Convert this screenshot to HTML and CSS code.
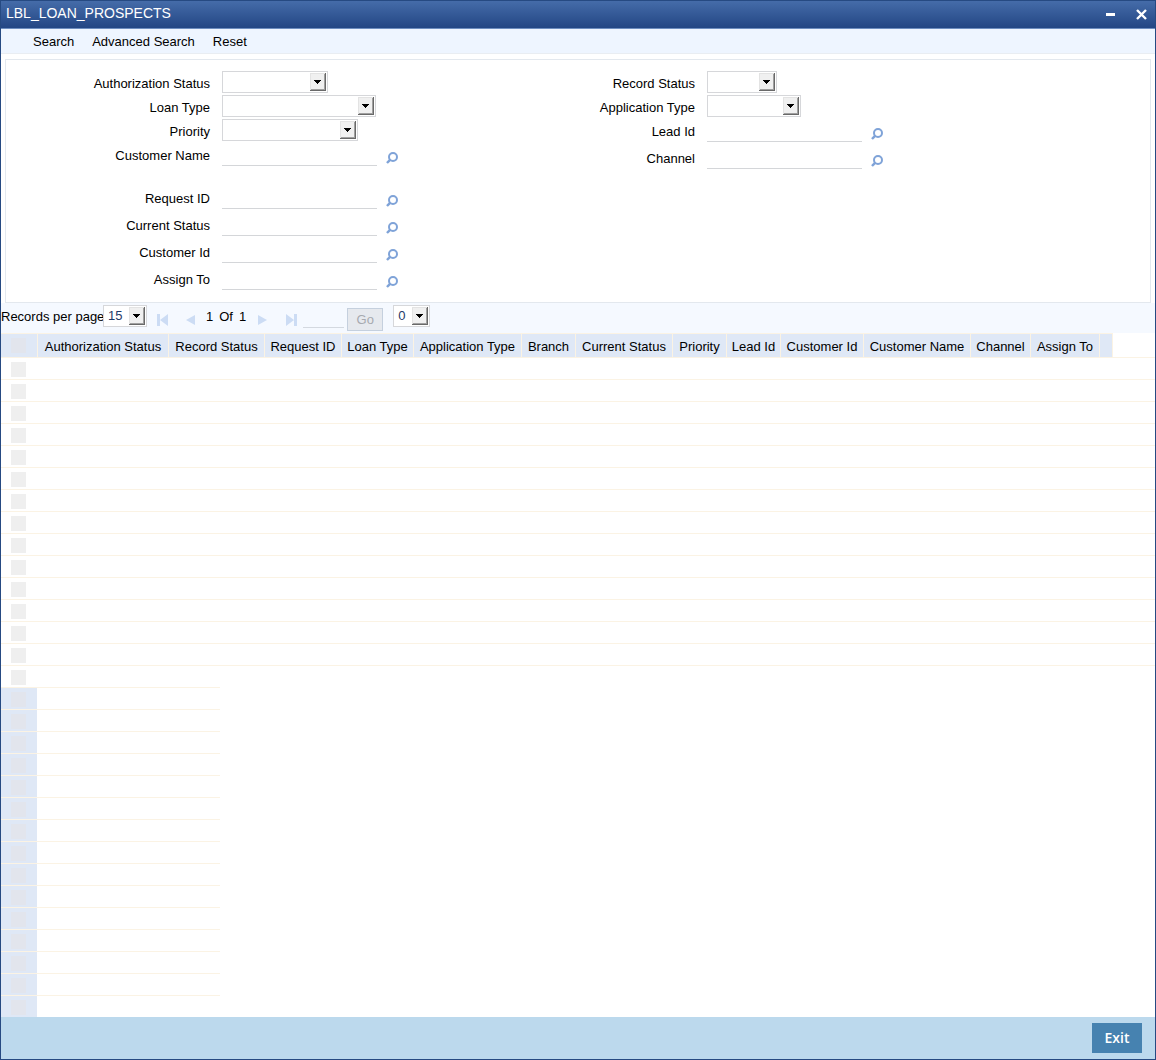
FILE: index.html
```html
<!DOCTYPE html>
<html lang="en">
<head>
<meta charset="utf-8">
<title>LBL_LOAN_PROSPECTS</title>
<link rel="stylesheet" href="styles.css">
</head>
<body>
<svg class="sprite" aria-hidden="true">
  <symbol id="lens" viewBox="0 0 12 12">
    <circle cx="7" cy="5" r="4" fill="none" stroke="#7fa3d8" stroke-width="2"/>
    <path d="M4.300 7.600 1 11" fill="none" stroke="#7fa3d8" stroke-width="2.500"/>
  </symbol>
</svg>
<div class="window">
  <header class="titlebar">
    <h1 class="title">LBL_LOAN_PROSPECTS</h1>
    <button class="winbtn" type="button" aria-label="Minimize"><svg width="11" height="11" viewBox="0 0 11 11"><path d="M1 4h9v3H1z" fill="#fff"/></svg></button>
    <button class="winbtn" type="button" aria-label="Close"><svg width="11" height="11" viewBox="0 0 11 11"><path d="M1 1l9 9M10 1l-9 9" stroke="#fff" stroke-width="2.400"/></svg></button>
  </header>
  <nav class="toolbar">
    <a href="#search">Search</a>
    <a href="#advanced">Advanced Search</a>
    <a href="#reset">Reset</a>
  </nav>

  <form class="criteria">
    <div class="column">
      <div class="field"><label for="auth">Authorization Status</label><select id="auth" class="w106"><option></option></select></div>
      <div class="field"><label for="loan">Loan Type</label><select id="loan" class="w154"><option></option></select></div>
      <div class="field"><label for="prio">Priority</label><select id="prio" class="w136"><option></option></select></div>
      <div class="field lov"><label for="cname">Customer Name</label><input id="cname" type="text"><button type="button" aria-label="Find customer name"><svg width="12" height="12"><use href="#lens"/></svg></button></div>
      <div class="field lov group"><label for="req">Request ID</label><input id="req" type="text"><button type="button" aria-label="Find request"><svg width="12" height="12"><use href="#lens"/></svg></button></div>
      <div class="field lov"><label for="cur">Current Status</label><input id="cur" type="text"><button type="button" aria-label="Find status"><svg width="12" height="12"><use href="#lens"/></svg></button></div>
      <div class="field lov"><label for="cid">Customer Id</label><input id="cid" type="text"><button type="button" aria-label="Find customer id"><svg width="12" height="12"><use href="#lens"/></svg></button></div>
      <div class="field lov"><label for="assign">Assign To</label><input id="assign" type="text"><button type="button" aria-label="Find assignee"><svg width="12" height="12"><use href="#lens"/></svg></button></div>
    </div>
    <div class="column">
      <div class="field"><label for="rec">Record Status</label><select id="rec" class="w70"><option></option></select></div>
      <div class="field"><label for="app">Application Type</label><select id="app" class="w94"><option></option></select></div>
      <div class="field lov"><label for="lead">Lead Id</label><input id="lead" type="text"><button type="button" aria-label="Find lead"><svg width="12" height="12"><use href="#lens"/></svg></button></div>
      <div class="field lov"><label for="chan">Channel</label><input id="chan" type="text"><button type="button" aria-label="Find channel"><svg width="12" height="12"><use href="#lens"/></svg></button></div>
    </div>
  </form>

  <div class="pager">
    <label class="per-page" for="size">Records per page</label>
    <select id="size" class="w44"><option>15</option></select>
    <div class="steps">
      <button type="button" aria-label="First page"><svg width="12" height="12" viewBox="0 0 12 12"><path d="M0 0h3v12H0zM11 0v12L3 6z"/></svg></button>
      <button type="button" aria-label="Previous page"><svg width="12" height="12" viewBox="0 0 12 12"><path d="M10 1v10L1 6z"/></svg></button>
      <span class="count"><span>1</span><span>Of</span><span>1</span></span>
      <button type="button" aria-label="Next page"><svg width="12" height="12" viewBox="0 0 12 12"><path d="M1 1v10l9-5z"/></svg></button>
      <button type="button" aria-label="Last page"><svg width="12" height="12" viewBox="0 0 12 12"><path d="M9 0h3v12H9zM1 0v12l8-6z"/></svg></button>
    </div>
    <input class="goto" type="text" aria-label="Page number">
    <button class="go" type="button" disabled>Go</button>
    <select class="w37" aria-label="Locked columns"><option>0</option></select>
  </div>

  <table class="grid results">
    <colgroup>
      <col class="c-pick"><col class="c-auth"><col class="c-record"><col class="c-request"><col class="c-loan"><col class="c-app"><col class="c-short"><col class="c-status"><col class="c-short"><col class="c-short"><col class="c-cid"><col class="c-cname"><col class="c-channel"><col class="c-assign"><col class="c-end"><col>
    </colgroup>
    <thead>
      <tr>
        <th class="pick"><input type="checkbox" aria-label="Select all"></th>
        <th>Authorization Status</th><th>Record Status</th><th>Request ID</th><th>Loan Type</th><th>Application Type</th><th>Branch</th><th>Current Status</th><th>Priority</th><th>Lead Id</th><th>Customer Id</th><th>Customer Name</th><th>Channel</th><th>Assign To</th><th></th><td class="rest"></td>
      </tr>
    </thead>
    <tbody>
      <tr><td class="pick"><input type="checkbox" aria-label="Select row 1"></td><td colspan="15"></td></tr>
      <tr><td class="pick"><input type="checkbox" aria-label="Select row 2"></td><td colspan="15"></td></tr>
      <tr><td class="pick"><input type="checkbox" aria-label="Select row 3"></td><td colspan="15"></td></tr>
      <tr><td class="pick"><input type="checkbox" aria-label="Select row 4"></td><td colspan="15"></td></tr>
      <tr><td class="pick"><input type="checkbox" aria-label="Select row 5"></td><td colspan="15"></td></tr>
      <tr><td class="pick"><input type="checkbox" aria-label="Select row 6"></td><td colspan="15"></td></tr>
      <tr><td class="pick"><input type="checkbox" aria-label="Select row 7"></td><td colspan="15"></td></tr>
      <tr><td class="pick"><input type="checkbox" aria-label="Select row 8"></td><td colspan="15"></td></tr>
      <tr><td class="pick"><input type="checkbox" aria-label="Select row 9"></td><td colspan="15"></td></tr>
      <tr><td class="pick"><input type="checkbox" aria-label="Select row 10"></td><td colspan="15"></td></tr>
      <tr><td class="pick"><input type="checkbox" aria-label="Select row 11"></td><td colspan="15"></td></tr>
      <tr><td class="pick"><input type="checkbox" aria-label="Select row 12"></td><td colspan="15"></td></tr>
      <tr><td class="pick"><input type="checkbox" aria-label="Select row 13"></td><td colspan="15"></td></tr>
      <tr><td class="pick"><input type="checkbox" aria-label="Select row 14"></td><td colspan="15"></td></tr>
      <tr class="last"><td class="pick"><input type="checkbox" aria-label="Select row 15"></td><td colspan="15"></td></tr>
    </tbody>
  </table>
  <table class="grid locked">
    <tbody>
      <tr><th class="pick"><input type="checkbox" aria-label="Select locked row 1"></th><td></td></tr>
      <tr><th class="pick"><input type="checkbox" aria-label="Select locked row 2"></th><td></td></tr>
      <tr><th class="pick"><input type="checkbox" aria-label="Select locked row 3"></th><td></td></tr>
      <tr><th class="pick"><input type="checkbox" aria-label="Select locked row 4"></th><td></td></tr>
      <tr><th class="pick"><input type="checkbox" aria-label="Select locked row 5"></th><td></td></tr>
      <tr><th class="pick"><input type="checkbox" aria-label="Select locked row 6"></th><td></td></tr>
      <tr><th class="pick"><input type="checkbox" aria-label="Select locked row 7"></th><td></td></tr>
      <tr><th class="pick"><input type="checkbox" aria-label="Select locked row 8"></th><td></td></tr>
      <tr><th class="pick"><input type="checkbox" aria-label="Select locked row 9"></th><td></td></tr>
      <tr><th class="pick"><input type="checkbox" aria-label="Select locked row 10"></th><td></td></tr>
      <tr><th class="pick"><input type="checkbox" aria-label="Select locked row 11"></th><td></td></tr>
      <tr><th class="pick"><input type="checkbox" aria-label="Select locked row 12"></th><td></td></tr>
      <tr><th class="pick"><input type="checkbox" aria-label="Select locked row 13"></th><td></td></tr>
      <tr><th class="pick"><input type="checkbox" aria-label="Select locked row 14"></th><td></td></tr>
      <tr><th class="pick"><input type="checkbox" aria-label="Select locked row 15"></th><td></td></tr>
    </tbody>
  </table>

  <footer class="footer"><button class="exit" type="button">Exit</button></footer>
</div>
</body>
</html>
```
FILE: styles.css
```css
* { box-sizing: border-box; }

body {
  margin: 0;
  font: 13px/16px "Liberation Sans", Arial, sans-serif;
  color: #000;
  background: #fff;
}

.sprite { display: none; }
svg { display: block; }

button, input, select { font: inherit; margin: 0; padding: 0; border-radius: 0; }

.window {
  display: flex;
  flex-direction: column;
  min-height: 100vh;
  border: 1px solid #264a82;
}

/* Title bar and menu */
.titlebar {
  display: flex;
  align-items: center;
  gap: 20px;
  height: 28px;
  padding: 0 8px 0 5px;
  border-bottom: 1px solid #6d8dbf;
  background: linear-gradient(#456ca9, #234684);
}
.title { flex: 1; margin: 0 0 4px; font-size: 14px; font-weight: normal; color: #fff; }
.winbtn { border: 0; background: none; }

.toolbar {
  display: flex;
  gap: 18px;
  height: 25px;
  padding: 5px 32px 0;
  border-bottom: 1px solid #e9edf2;
  background: #eef5ff;
}
.toolbar a { color: #000; text-decoration: none; }

/* Search criteria */
.criteria {
  display: grid;
  grid-template-columns: 485px 1fr;
  margin: 5px 4px 0;
  padding: 11px 0 12px;
  border: 1px solid #e3e8ee;
}
.field { display: flex; height: 24px; }
.field label { width: 204px; margin-right: 12px; padding-top: 5px; text-align: right; }
.field.lov { height: 27px; }
.field.group { margin-top: 16px; }
.field.lov:last-child { height: 23px; }
.field input {
  width: 155px;
  height: 23px;
  border: 0;
  border-bottom: 1px solid #d4d6d9;
  background: none;
}
.field button { height: 12px; margin: 9px 0 0 9px; border: 0; background: none; }

select {
  appearance: none;
  height: 22px;
  padding-left: 4px;
  border: 1px solid #d6d7da;
  color: #1f3a68;
  background: #fff url("data:image/svg+xml,%3Csvg xmlns='http://www.w3.org/2000/svg' width='16' height='18'%3E%3Cpath fill='%23f0f0f0' d='M0 0h16v18H0z'/%3E%3Cpath fill='%23e3e3e3' d='M0 0h16v1H1v17H0z'/%3E%3Cpath fill='%23a0a0a0' d='M14 1h1v16H1v-1h13z'/%3E%3Cpath fill='%23696969' d='M15 0h1v18H0v-1h15z'/%3E%3Cpath d='M4 7h7v1h-1v1H9v1H8v1H7v-1H6V9H5V8H4z'/%3E%3C/svg%3E") no-repeat right 1px top 1px;
}
.w37 { width: 37px; }
.w44 { width: 44px; }
.w70 { width: 70px; }
.w94 { width: 94px; }
.w106 { width: 106px; }
.w136 { width: 136px; }
.w154 { width: 154px; }

/* Paging */
.pager {
  display: flex;
  align-items: flex-start;
  height: 30px;
  padding-top: 2px;
  background: #f5f9ff;
}
.per-page { width: 102px; padding-top: 4px; white-space: nowrap; }
.steps { display: flex; margin-left: 10px; }
.steps button { height: 12px; margin: 9px 16px 0 0; border: 0; background: none; }
.steps path { fill: #ccdcf4; }
.count { display: flex; gap: 6px; margin: 4px 11px 0 -7px; }
.steps button:last-child { margin-right: 0; }
.goto {
  width: 41px;
  height: 23px;
  margin-left: 6px;
  border: 0;
  border-bottom: 1px solid #d4d9e0;
  background: none;
}
.go {
  width: 36px;
  height: 23px;
  margin: 3px 10px 0 3px;
  border: 1px solid #c5d0de;
  color: #a7aab0;
  background: #e6e9ee;
}

/* Record grids */
.grid { border-collapse: separate; border-spacing: 0; table-layout: fixed; }
.grid th, .grid td { padding: 0; border-bottom: 1px solid #fbf3e4; }
.grid th { font-weight: normal; background: #dfe8f6; }
.grid .pick { width: 36px; padding: 1px 0 0 10px; text-align: left; vertical-align: middle; }
.grid input { display: block; appearance: none; width: 15px; height: 15px; background: #efefef; }
.grid th input { background: #e2e5ed; }
.grid tr { height: 22px; }

.results { width: 100%; }
.results thead tr { height: 25px; }
.results thead th {
  padding-top: 2px;
  border-top: 1px solid #fbf3e4;
  border-left: 1px solid #fbf3e4;
  white-space: nowrap;
}
.results thead .pick { border-left: 0; padding: 0 0 0 10px; }
.results .rest { border-left: 1px solid #fbf3e4; }
.results .last td { border-bottom-color: transparent; }

.c-pick { width: 36px; }
.c-auth { width: 131px; }
.c-record { width: 96px; }
.c-request { width: 77px; }
.c-loan { width: 72px; }
.c-app { width: 108px; }
.c-short { width: 54px; }
.c-status { width: 97px; }
.c-cid { width: 83px; }
.c-cname { width: 107px; }
.c-channel { width: 60px; }
.c-assign { width: 69px; }
.c-end { width: 13px; }

.locked { width: 219px; margin-top: -1px; border-top: 1px solid #fbf3e4; }
.locked tr:last-child > * { border-bottom: 0; }
.locked tr:last-child { height: 21px; }

/* Footer */
.footer {
  display: flex;
  flex-grow: 1;
  justify-content: flex-end;
  align-items: center;
  min-height: 42px;
  padding: 0 13px;
  background: #bcd9ed;
}
.exit {
  width: 50px;
  height: 30px;
  border: 0;
  font: 600 14px/16px "Open Sans", "Noto Sans", sans-serif;
  color: #fff;
  background: #4682b0;
}
```
